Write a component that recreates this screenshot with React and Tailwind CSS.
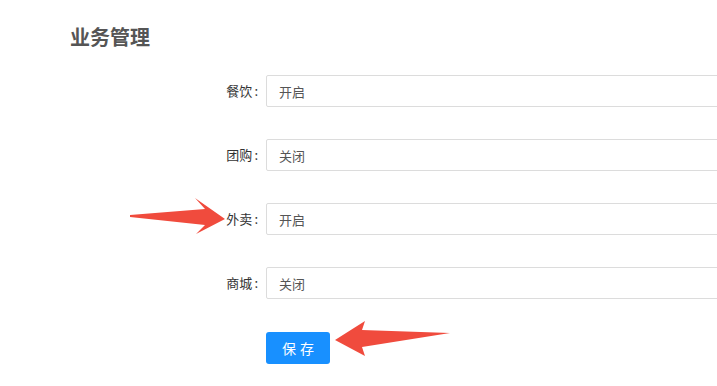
import React from 'react';

const rows = [
  { label: '餐饮', value: '开启' },
  { label: '团购', value: '关闭' },
  { label: '外卖', value: '开启' },
  { label: '商城', value: '关闭' },
];

const App = () => {
  return (
    <div
      className="relative w-full h-[386px] overflow-hidden bg-white"
      style={{ fontFamily: '"Noto Sans CJK SC", "Noto Sans", sans-serif' }}
    >
      <h2 className="pl-[70px] pt-[25px] text-[20px] leading-[24px] font-bold text-[#555]">业务管理</h2>

      <div className="mt-[26px] flex flex-col gap-8">
        {rows.map((row) => (
          <div key={row.label} className="flex items-center h-8">
            <label className="w-[258px] shrink-0 text-right text-[13px] text-[#333]">
              {row.label}<span className="ml-[2px]">:</span>
            </label>
            <input
              readOnly
              value={row.value}
              className="ml-2 w-[520px] h-8 shrink-0 border border-[#dcdcdc] rounded-[2px] pl-3 text-[13px] text-[#555] outline-none"
            />
          </div>
        ))}

        <div className="flex">
          <button className="ml-[266px] mt-[1px] w-16 h-8 shrink-0 rounded-[3px] bg-[#1890ff] text-white text-[14px] tracking-[4px] pl-1">
            保存
          </button>
        </div>
      </div>

      {/* annotation arrows */}
      <svg className="absolute inset-0 pointer-events-none" width="717" height="386">
        <polygon
          points="130,215 205,209 195,198 225,219 196,234 205,225 130,217"
          fill="#f04b3d"
        />
        <polygon
          points="450,333 362,330 365,321 335,340 365,356 362,347"
          fill="#f04b3d"
        />
      </svg>
    </div>
  );
};

export default App;
